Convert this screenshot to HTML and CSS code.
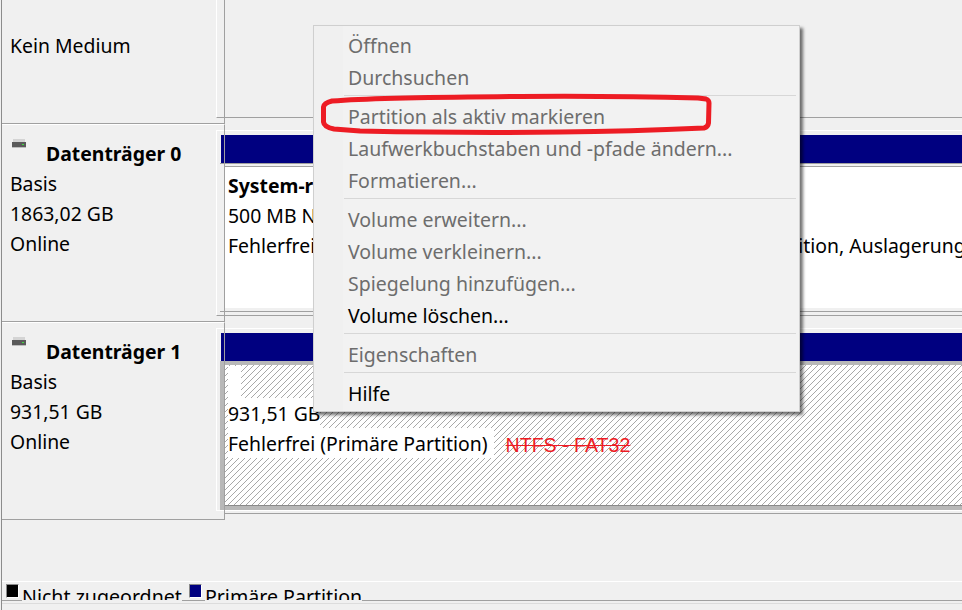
FILE: index.html
```html
<!DOCTYPE html>
<html lang="de">
<head>
<meta charset="utf-8">
<title>Datenträgerverwaltung</title>
<link rel="stylesheet" href="styles.css">
</head>
<body>
<div class="page">
  <div class="rows">
    <section class="row row-top">
      <div class="label"><div class="line">Kein Medium</div></div>
      <div class="track"><div class="frame frame-top"></div></div>
    </section>

    <section class="row row-disk">
      <div class="label">
        <svg class="disk-icon" width="14" height="10" viewBox="0 0 14 10"><rect x="1" y="0" width="12" height="3" fill="#d4d4d4"/><rect x="0" y="3" width="14" height="5" fill="#5a5a5a"/><rect x="10" y="5" width="2" height="1" fill="#3fdc3f"/><rect x="0" y="8" width="14" height="1" fill="#bdbdbd"/></svg>
        <div class="line disk-name">Datenträger 0</div>
        <div class="line">Basis</div>
        <div class="line">1863,02 GB</div>
        <div class="line">Online</div>
      </div>
      <div class="track">
        <div class="frame">
          <div class="bar"></div>
          <div class="vol-wrap">
            <div class="vol-plain">
              <div class="vol-a">
                <div class="line strong">System-reserviert</div>
                <div class="line">500 MB NTFS</div>
                <div class="line">Fehlerfrei (System, Aktiv, Primäre Partition)</div>
              </div>
              <div class="vol-b">
                <div class="line strong">(C:)</div>
                <div class="line">1862,52 GB NTFS</div>
                <div class="line">Fehlerfrei (Startpartition, Auslagerungsdatei, Absturzabbild)</div>
              </div>
            </div>
          </div>
        </div>
      </div>
    </section>

    <section class="row row-disk">
      <div class="label">
        <svg class="disk-icon" width="14" height="10" viewBox="0 0 14 10"><rect x="1" y="0" width="12" height="3" fill="#d4d4d4"/><rect x="0" y="3" width="14" height="5" fill="#5a5a5a"/><rect x="10" y="5" width="2" height="1" fill="#3fdc3f"/><rect x="0" y="8" width="14" height="1" fill="#bdbdbd"/></svg>
        <div class="line disk-name">Datenträger 1</div>
        <div class="line">Basis</div>
        <div class="line">931,51 GB</div>
        <div class="line">Online</div>
      </div>
      <div class="track">
        <div class="frame frame-last">
          <div class="bar"></div>
          <div class="vol-hatch">
            <div class="hatch-line hatch-first"><span class="bg empty"></span></div>
            <div class="hatch-line"><span class="bg">931,51 GB</span></div>
            <div class="hatch-line"><span class="bg bg-wide">Fehlerfrei (Primäre Partition)</span><span class="note">NTFS - FAT32</span></div>
          </div>
        </div>
        <div class="tail-rule"></div>
      </div>
    </section>
  </div>

  <footer class="legend">
    <span class="swatch swatch-black"></span><span class="legend-text">Nicht zugeordnet</span>
    <span class="swatch swatch-navy"></span><span class="legend-text">Primäre Partition</span>
  </footer>
  <div class="statusbar"></div>
</div>

<nav class="menu">
  <div class="item">Öffnen</div>
  <div class="item">Durchsuchen</div>
  <div class="sep"></div>
  <div class="item">Partition als aktiv markieren</div>
  <div class="item">Laufwerkbuchstaben und -pfade ändern...</div>
  <div class="item">Formatieren...</div>
  <div class="sep"></div>
  <div class="item">Volume erweitern...</div>
  <div class="item">Volume verkleinern...</div>
  <div class="item">Spiegelung hinzufügen...</div>
  <div class="item on">Volume löschen...</div>
  <div class="sep"></div>
  <div class="item">Eigenschaften</div>
  <div class="sep"></div>
  <div class="item on">Hilfe</div>
</nav>

<svg class="ring" width="400" height="46" viewBox="0 0 400 46"><path d="M12 8 C60 4 130 4 200 3.500 C270 3 340 4 378 5 L386 6 Q389 7 389 10 L388.500 30 Q388 34 384 35 C340 37 300 38.500 240 39 C170 40 90 39 40 38 L14 36 Q4 34 3.500 29 L3.500 14 Q4 10 12 8 Z" fill="none" stroke="#ed1c24" stroke-width="5"/></svg>
</body>
</html>
```
FILE: styles.css
```css
* { box-sizing: border-box; }
html, body { margin: 0; height: 100%; }
body {
  width: 962px;
  height: 610px;
  overflow: hidden;
  background: #f0f0f0;
  font-family: "Noto Sans", "Open Sans", sans-serif;
  font-size: 19.4px;
  color: #000;
  position: relative;
}
.page {
  height: 610px;
  display: flex;
  flex-direction: column;
  margin-left: 1px;
  border-left: 1px solid #8c8c8c;
}
.rows { flex: 0 0 auto; height: 581px; }
.row { display: flex; }
.row-top { height: 124px; }
.row-disk { height: 198px; }

.label {
  flex: 0 0 223px;
  border-right: 1px solid #a0a0a0;
  border-bottom: 1px solid #a0a0a0;
  border-top: 1px solid #fff;
  padding: 0 0 0 8px;
  position: relative;
}
.row-top .label { border-top: 0; padding-top: 31px; }
.row-disk .label { padding-top: 14px; }
.line { height: 30px; line-height: 30px; white-space: nowrap; overflow: hidden; }
.disk-name { font-weight: 700; padding-left: 36px; }
.strong { font-weight: 700; }
.disk-icon { position: absolute; left: 10px; top: 14px; }

.track { flex: 1 1 auto; min-width: 0; padding-top: 6px; margin-left: -9px; }
.row-top .track { padding-top: 0; }
.frame {
  height: 186px;
  border-left: 1px solid #fff;
  border-top: 1px solid #fff;
  border-bottom: 1px solid #a0a0a0;
  padding: 4px 0 0 3px;
}
.frame-top { height: 118px; padding: 0; border-top: 0; }
.frame-last { height: 183px; border-bottom-color: #fff; }
.tail-rule { margin: 2px 0 0 8px; border-top: 1px solid #a0a0a0; }
.bar { height: 28px; margin-left: 1px; background: #000080; }
.vol-wrap {
  height: 149px;
  padding: 2px 0 0 4px;
  border-top: 1px solid #a0a0a0;
  border-bottom: 1px solid #a0a0a0;
}
.vol-plain {
  display: flex;
  height: 142px;
  border-left: 1px solid #a0a0a0;
  border-top: 1px solid #a0a0a0;
  background: #fff;
  padding: 4px 0 0 3px;
  overflow: hidden;
}
.vol-a { flex: 0 0 391px; overflow: hidden; }
.vol-b { flex: 0 0 auto; }

.vol-hatch {
  height: 149px;
  border: 4px solid #b8b8b8;
  border-left-width: 5px;
  border-right: 0;
  padding: 1px 0 0 3px;
  background: repeating-linear-gradient(135deg, #fff 0, #fff 3.24px, #a8a8a8 3.24px, #a8a8a8 4.24px);
  box-shadow: inset 0 -1px 0 #8a8a8a;
}
.hatch-line { height: 30px; line-height: 32px; white-space: nowrap; display: flex; }
.hatch-first { height: 32px; }
.bg { background: #fff; display: block; }
.bg-wide { padding-right: 6px; }
.empty { width: 13px; height: 32px; }
.note {
  color: #ed1c24;
  font-family: "Liberation Sans", Arial, sans-serif;
  font-size: 19.6px;
  line-height: 34px;
  text-decoration: line-through;
  margin-left: 12px;
}

.legend {
  height: 20px;
  border-top: 1px solid #fff;
  display: flex;
  overflow: hidden;
  padding-left: 4px;
  background: linear-gradient(#a0a0a0, #a0a0a0) left bottom / 100% 1px no-repeat;
}
.swatch { flex: 0 0 13px; height: 14px; margin-top: 2px; border: 1px solid #8a8a8a; border-bottom-color: #fff; border-right-color: #fff; }
.swatch-black { background: #000; }
.swatch-navy { background: #000080; margin-left: 7px; }
.legend-text {
  height: 19px;
  border-bottom: 1px solid #f0f0f0;
  background: #f0f0f0;
  overflow: hidden;
  font-size: 19.6px;
  line-height: 30px;
  margin-left: 3px;
  white-space: nowrap;
}
.statusbar { flex: 1 1 auto; border-top: 2px solid #f0f0f0; box-shadow: inset 0 1px 0 #dcdcdc; }

.menu {
  position: absolute;
  left: 313px;
  top: 25px;
  width: 487px;
  height: 387px;
  padding: 4px 3px 0 1px;
  background: linear-gradient(90deg, #f0f0f0 29px, #f2f2f2 29px);
  border: 1px solid #cfcfcf;
  box-shadow: 3px 3px 3px rgba(0,0,0,.55);
  color: #6d6d6d;
  font-size: 19.5px;
}
.item { height: 32px; line-height: 32px; padding-left: 33px; white-space: nowrap; }
.on { color: #000; }
.sep { height: 7px; margin-left: 29px; padding-top: 1px; }
.sep::before { content: ""; display: block; height: 1px; background: #d7d7d7; }
.ring { position: absolute; left: 320px; top: 93px; }
```
